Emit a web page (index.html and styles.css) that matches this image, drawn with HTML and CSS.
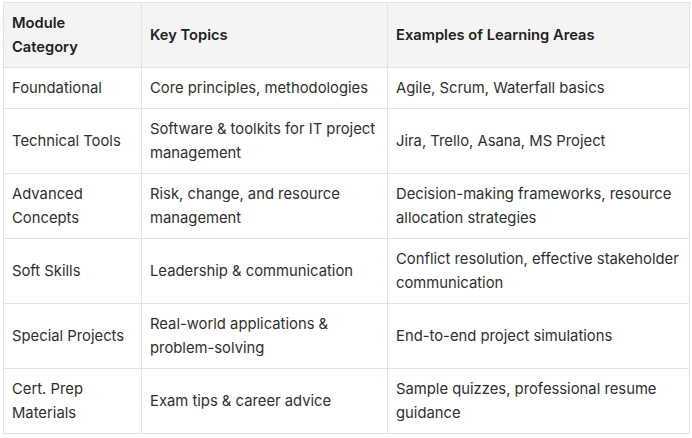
FILE: index.html
```html
<!DOCTYPE html>
<html>
<head>
<meta charset="utf-8">
<link rel="stylesheet" href="styles.css">
</head>
<body>
<table class="grid">
  <colgroup>
    <col class="c1"><col class="c2"><col class="c3">
  </colgroup>
  <thead>
    <tr><th>Module Category</th><th>Key Topics</th><th>Examples of Learning Areas</th></tr>
  </thead>
  <tbody>
    <tr><td>Foundational</td><td>Core principles, methodologies</td><td>Agile, Scrum, Waterfall basics</td></tr>
    <tr><td>Technical Tools</td><td>Software &amp; toolkits for IT project management</td><td>Jira, Trello, Asana, MS Project</td></tr>
    <tr><td>Advanced Concepts</td><td>Risk, change, and resource management</td><td>Decision-making frameworks, resource allocation strategies</td></tr>
    <tr><td>Soft Skills</td><td>Leadership &amp; communication</td><td>Conflict resolution, effective stakeholder communication</td></tr>
    <tr><td>Special Projects</td><td>Real-world applications &amp; problem-solving</td><td>End-to-end project simulations</td></tr>
    <tr><td>Cert. Prep Materials</td><td>Exam tips &amp; career advice</td><td>Sample quizzes, professional resume guidance</td></tr>
  </tbody>
</table>
</body>
</html>
```
FILE: styles.css
```css
html, body {
  margin: 0;
  padding: 0;
  background: #ffffff;
}
body {
  padding: 2px 0 0 3px;
  font-family: Inter, "Noto Sans", sans-serif;
  font-size: 14.8px;
  line-height: 24px;
  color: #2f2f2f;
}
.grid {
  border-collapse: collapse;
  width: 686px;
  table-layout: fixed;
}
.c1 { width: 138px; }
.c2 { width: 246px; }
.c3 { width: 302px; }
.grid th, .grid td {
  border: 1px solid #e3e3e3;
  padding: 8px 6px 8px 8px;
  text-align: left;
  vertical-align: middle;
}
.grid th {
  background: #f4f4f4;
  font-weight: 600;
  font-size: 14.7px;
  color: #222222;
}
.grid th:first-child {
  padding-right: 12px;
}
```
